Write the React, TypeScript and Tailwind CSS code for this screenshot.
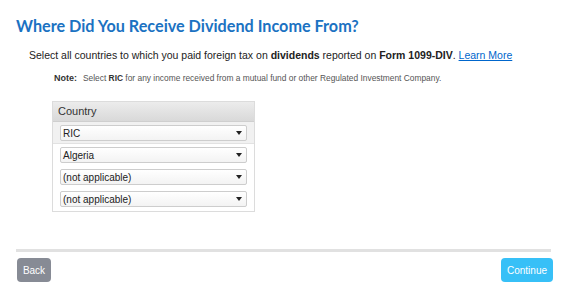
export default function App() {
  const rows = ["RIC", "Algeria", "(not applicable)", "(not applicable)"]

  return (
    <div className="w-[567px] h-[297px] bg-white font-['Liberation_Sans',Arial,sans-serif] text-[#222] flex flex-col">
      <h1 className="pl-[16px] pt-[16px] text-[16.2px] leading-[20px] font-bold text-[#1b72c2] font-['Lato',sans-serif]">
        Where Did You Receive Dividend Income From?
      </h1>

      <p className="pl-[29px] pt-[12px] text-[10.5px] leading-[14px] whitespace-nowrap">
        Select all countries to which you paid foreign tax on <b>dividends</b> reported on <b>Form 1099-DIV</b>.{" "}
        <span className="text-[#0066cc] underline">Learn More</span>
      </p>

      <p className="pl-[54px] pt-[11px] text-[8.4px] leading-[10px] text-[#555] whitespace-nowrap">
        <b className="text-[9px] text-[#333] mr-[6px]">Note:</b>
        Select <b className="text-[#333]">RIC</b> for any income received from a mutual fund or other Regulated Investment Company.
      </p>

      <div className="ml-[52px] mt-[18px] w-[203px] border border-[#dcdcdc]">
        <div className="h-[20px] px-[5px] flex items-center text-[11px] text-[#333] bg-gradient-to-b from-[#ececec] to-[#d9d9d9] border-b border-[#cfcfcf]">
          Country
        </div>
        {rows.map((r, i) => (
          <div
            key={i}
            className={`px-[7px] pt-[3px] ${i === 0 ? "bg-[#f1f1f1] border-b border-[#e2e2e2] pb-[2px]" : "pb-[3px]"} ${i === rows.length - 1 ? "pb-[4px]" : ""}`}
          >
            <div className="h-[16px] border border-[#cdcdcd] rounded-[2px] bg-gradient-to-b from-white to-[#f3f3f3] flex items-center justify-between pl-[2px] pr-[4px] text-[10px] text-[#222]">
              <span>{r}</span>
              <svg width="6" height="4" viewBox="0 0 6 4">
                <path d="M0 0h6L3 4z" fill="#222" />
              </svg>
            </div>
          </div>
        ))}
      </div>

      <div className="mt-auto mx-[16px] border-t-[3px] border-[#e1e1e1]" />
      <div className="flex justify-between px-[14px] pt-[6px] pb-[15px]">
        <button className="ml-[3px] w-[34px] h-[24px] rounded-[4px] bg-[#878b95] text-white text-[10px]">Back</button>
        <button className="w-[52px] h-[24px] rounded-[4px] bg-[#37c0f7] text-white text-[10px]">Continue</button>
      </div>
    </div>
  )
}
